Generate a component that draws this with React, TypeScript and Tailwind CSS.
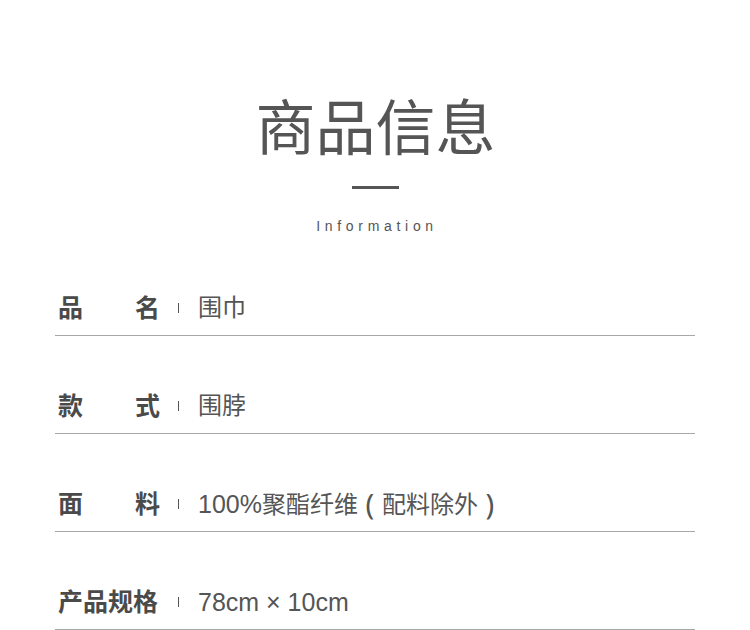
import React from "react";

type Part = { t: string; latin?: boolean; paren?: boolean };
const rows: { label: string[]; value: Part[] }[] = [
  { label: ["品", "名"], value: [{ t: "围巾" }] },
  { label: ["款", "式"], value: [{ t: "围脖" }] },
  {
    label: ["面", "料"],
    value: [
      { t: "100%", latin: true },
      { t: "聚酯纤维" },
      { t: "（", paren: true },
      { t: "配料除外" },
      { t: "）", paren: true },
    ],
  },
  { label: ["产品规格"], value: [{ t: "78cm × 10cm", latin: true }] },
];

export default function App() {
  return (
    <div
      className="w-[750px] h-[630px] bg-white overflow-hidden"
      style={{ fontFamily: '"Liberation Sans", "Noto Sans CJK SC", sans-serif' }}
    >
      <div className="flex flex-col items-center pt-[98px]">
        <h1 className="text-[60px] leading-[64px] font-normal text-[#555] ml-[1px]">商品信息</h1>
        <div className="mt-[24px] w-[47px] h-[3px] bg-[#555] ml-[1px]" />
        <div className="mt-[29px] text-[14px] leading-[16px] tracking-[4.7px] text-[#555] ml-[4px]">
          Information
        </div>
      </div>
      <div className="mx-[55px] mt-[4px]">
        {rows.map((r, i) => (
          <div
            key={i}
            className="h-[98px] flex items-end pb-[11px] border-b border-[#a8a8a8]"
          >
            <div className="flex items-center h-[32px]">
              <div className="ml-[3px] w-[102px] flex justify-between text-[25px] leading-[32px] font-bold text-[#4a4a4a]">
                {r.label.map((l, j) => (
                  <span key={j}>{l}</span>
                ))}
              </div>
              <div className="ml-[18px] w-px h-[10px] bg-[#555]" />
              <div className="ml-[19px] text-[24px] leading-[32px] text-[#555] whitespace-pre">
                {r.value.map((p, j) =>
                  p.latin ? (
                    <span key={j} className="text-[25px]">
                      {p.t}
                    </span>
                  ) : p.paren ? (
                    <span
                      key={j}
                      className="inline-block w-[24px] text-center text-[29px] leading-[32px] align-top"
                      style={{ fontFamily: '"Noto Sans", sans-serif' }}
                    >
                      {p.t === "（" ? "(" : ")"}
                    </span>
                  ) : (
                    <span key={j}>{p.t}</span>
                  )
                )}
              </div>
            </div>
          </div>
        ))}
      </div>
    </div>
  );
}
